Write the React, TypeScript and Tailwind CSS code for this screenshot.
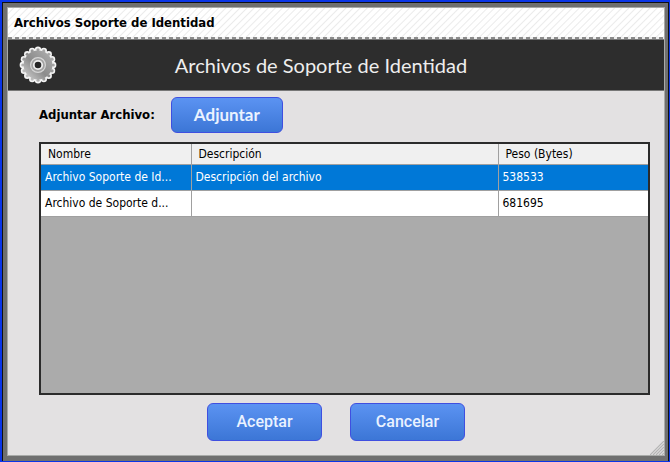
const files = [
  { name: "Archivo Soporte de Id...", description: "Descripción del archivo", size: 538533, selected: true },
  { name: "Archivo de Soporte d...", description: "", size: 681695, selected: false },
];

const teeth = Array.from({ length: 16 }, (_, i) => {
  const angle = (i * Math.PI * 2) / 16;
  return { cx: 20 + 15.2 * Math.sin(angle), cy: 20 - 15.2 * Math.cos(angle) };
});

const buttonClass =
  "rounded-md border border-[#3f4fe0] bg-linear-to-b from-[#5b93f2] to-[#3c76d6] text-[#eaf2ff]";

function GearIcon() {
  return (
    <svg viewBox="0 0 40 40" className="size-10 shrink-0" aria-hidden="true">
      <defs>
        <linearGradient id="gear" gradientUnits="userSpaceOnUse" x1="6" y1="34" x2="34" y2="6">
          <stop offset="0" stopColor="#d2d2d2" />
          <stop offset="0.45" stopColor="#8c8c8c" />
          <stop offset="1" stopColor="#b0b0b0" />
        </linearGradient>
      </defs>
      <g fill="#f4f4f4">
        {teeth.map((tooth, i) => (
          <circle key={i} cx={tooth.cx} cy={tooth.cy} r="3.2" />
        ))}
        <circle cx="20" cy="20" r="15.6" />
      </g>
      <g fill="url(#gear)">
        {teeth.map((tooth, i) => (
          <circle key={i} cx={tooth.cx} cy={tooth.cy} r="1.6" />
        ))}
        <circle cx="20" cy="20" r="14.4" />
      </g>
      <circle cx="20" cy="20" r="7.4" fill="#a2a2a2" stroke="#d6d6d6" strokeWidth="1.2" />
      <circle cx="20" cy="20" r="4.2" fill="#262626" stroke="#eeeeee" strokeWidth="1.8" />
    </svg>
  );
}

function ResizeGrip() {
  return (
    <svg viewBox="0 0 14 14" className="absolute right-0 bottom-0 size-[14px]" aria-hidden="true">
      <path d="M0 14L14 0M3 14L14 3M6 14L14 6M9 14L14 9M12 14L14 12" stroke="#b4b4b4" strokeWidth="1.2" />
    </svg>
  );
}

export default function App() {
  return (
    <div className="flex min-h-screen flex-col border-t-2 border-r border-b border-l-2 border-[#0a35e8] font-['DejaVu_Sans_Condensed','DejaVu_Sans',sans-serif] text-black">
      <div className="flex flex-1 flex-col border-t border-r border-l border-[#101010] bg-[#6f6f6f] pt-[4px] pr-[3px] pb-[5px] pl-[4px]">
        <main className="relative flex flex-1 flex-col border border-[#a8aaa8] bg-[#e3e1e2]">
          <header className="bg-white bg-[repeating-linear-gradient(135deg,#fff_0px,#fff_3px,#ebebeb_4px,#fff_5px)]">
            <h1 className="px-[6px] text-[13px] leading-[29px] font-bold">Archivos Soporte de Identidad</h1>
            <div className="h-[2px] bg-[repeating-linear-gradient(90deg,#8c8c8c_0px,#8c8c8c_4px,#eee_4px,#eee_7px)]" />
          </header>

          <div className="flex h-[52px] items-center border-t border-b border-[#777] bg-[#2d2d2d] pr-[80px] pl-[10px]">
            <GearIcon />
            <h2 className="flex-1 text-center font-['Lato',sans-serif] text-[20px] text-[#eee]">
              Archivos de Soporte de Identidad
            </h2>
          </div>

          <div className="flex flex-1 flex-col pt-[6px] pr-[14px] pb-[14px] pl-[31px]">
            <div className="flex items-center gap-[16px]">
              <label htmlFor="attach" className="text-[13px] font-bold">
                Adjuntar Archivo:
              </label>
              <button
                id="attach"
                type="button"
                className={`${buttonClass} h-[36px] w-[112px] font-['Lato',sans-serif] text-[17px] font-bold`}
              >
                Adjuntar
              </button>
            </div>

            <section className="mt-[9px] flex-1 border-2 border-[#2b2b2b] bg-[#ababab]">
              <table className="w-full table-fixed border-collapse text-left text-[12px]">
                <colgroup>
                  <col className="w-[150px]" />
                  <col />
                  <col className="w-[150px]" />
                </colgroup>
                <thead>
                  <tr className="h-[20px] border-b border-[#a0a0a0] bg-[#f0f0f0]">
                    <th className="border-r border-[#a0a0a0] px-[7px] font-normal">Nombre</th>
                    <th className="border-r border-[#a0a0a0] px-[7px] font-normal">Descripción</th>
                    <th className="px-[7px] font-normal">Peso (Bytes)</th>
                  </tr>
                </thead>
                <tbody>
                  {files.map((file) => (
                    <tr
                      key={file.name}
                      className={
                        file.selected
                          ? "h-[26px] border-b border-[#a0a0a0] bg-[#0078d7] text-white"
                          : "h-[26px] border-b border-[#a0a0a0] bg-white"
                      }
                    >
                      <td className="truncate border-r border-[#a0a0a0] px-[4px]">{file.name}</td>
                      <td className="truncate border-r border-[#a0a0a0] px-[4px]">{file.description}</td>
                      <td className="px-[4px]">{file.size}</td>
                    </tr>
                  ))}
                </tbody>
              </table>
            </section>

            <footer className="mt-[8px] flex justify-center gap-[28px] pr-[17px]">
              <button
                type="button"
                className={`${buttonClass} h-[38px] w-[115px] font-['Roboto',sans-serif] text-[16px] font-medium`}
              >
                Aceptar
              </button>
              <button
                type="button"
                className={`${buttonClass} h-[38px] w-[115px] font-['Roboto',sans-serif] text-[16px] font-medium`}
              >
                Cancelar
              </button>
            </footer>
          </div>
          <ResizeGrip />
        </main>
      </div>
    </div>
  );
}
